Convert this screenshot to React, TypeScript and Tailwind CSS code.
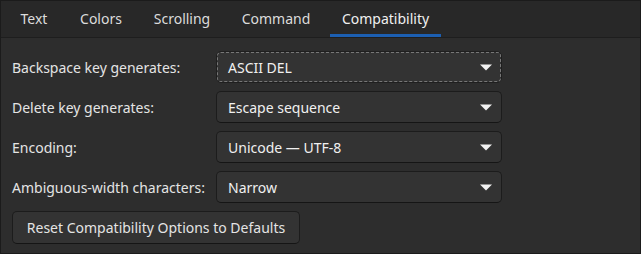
import { useState } from "react";

const TABS = [
  { label: "Text", w: "w-[52px]" },
  { label: "Colors", w: "w-[64px]" },
  { label: "Scrolling", w: "w-[80px]" },
  { label: "Command", w: "w-[90px]" },
  { label: "Compatibility", w: "w-[111px]" },
];

const ROWS = [
  { label: "Backspace key generates:", value: "ASCII DEL" },
  { label: "Delete key generates:", value: "Escape sequence" },
  { label: "Encoding:", value: "Unicode — UTF-8" },
  { label: "Ambiguous-width characters:", value: "Narrow" },
];

function Arrow() {
  return (
    <svg width="12" height="7" viewBox="0 0 12 7" className="shrink-0">
      <path d="M0 0.5 L12 0.5 L6 6.5 Z" fill="#f2f2f2" />
    </svg>
  );
}

export default function App() {
  const [active, setActive] = useState(4);

  return (
    <div
      className="w-[641px] h-[254px] border border-[#1b1b1b] bg-[#2d2d2d] text-[#eeeeee] flex flex-col overflow-hidden"
      style={{ fontFamily: '"Noto Sans", "Open Sans", sans-serif' }}
    >
      <div className="h-[37px] shrink-0 bg-[#282828] border-b border-[#1e1e1e] flex items-stretch gap-[9px] pl-[7px]">
        {TABS.map((t, i) => (
          <button
            key={t.label}
            onClick={() => setActive(i)}
            className={`${t.w} relative flex items-center justify-center text-[14px] pb-[1px] ${
              i === active ? "text-[#f0f0f0]" : "text-[#dcdcdc]"
            }`}
          >
            {t.label}
            {i === active && (
              <span className="absolute left-0 right-0 bottom-0 h-[3px] bg-[#1c5fb2]" />
            )}
          </button>
        ))}
      </div>

      <div className="flex flex-col gap-[8px] pt-[13px] pl-[11px]">
        {ROWS.map((r, i) => (
          <div key={r.label} className="flex items-center">
            <div className="w-[204px] text-[14px] text-[#e4e4e4]">{r.label}</div>
            <div
              className={`w-[286px] h-[32px] rounded-[5px] bg-[#333333] flex items-center justify-between pl-[11px] pr-[9px] text-[14px] text-[#f0f0f0] ${
                i === 0
                  ? "border border-[#1f1f1f] outline outline-1 outline-dashed outline-[#777777] -outline-offset-[2px]"
                  : "border border-[#1c1c1c] border-b-[#151515]"
              }`}
            >
              <span>{r.value}</span>
              <Arrow />
            </div>
          </div>
        ))}
        <div>
          <button className="h-[33px] w-[288px] rounded-[5px] bg-[#333333] border border-[#1c1c1c] border-b-[#151515] text-[14px] text-[#e4e4e4] flex items-center justify-center">
            Reset Compatibility Options to Defaults
          </button>
        </div>
      </div>
    </div>
  );
}
